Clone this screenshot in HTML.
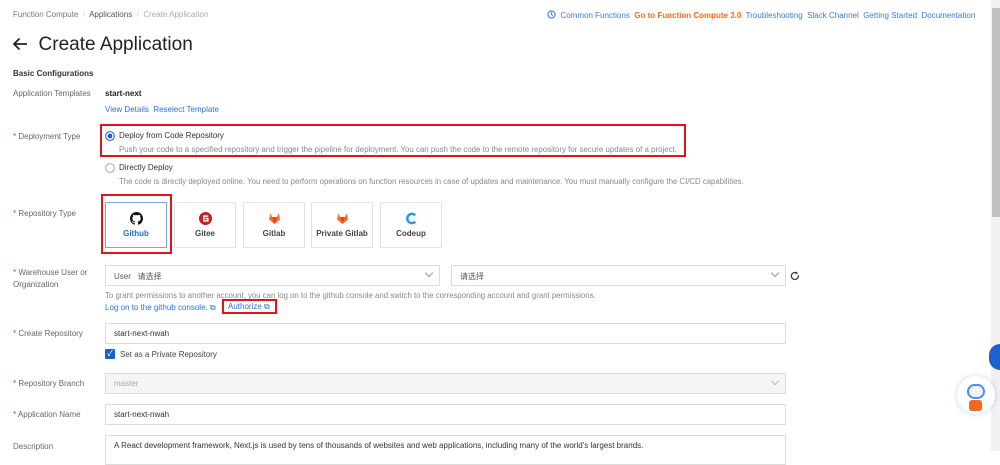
<!DOCTYPE html>
<html><head><meta charset="utf-8"><style>
*{box-sizing:border-box;margin:0;padding:0}
body{width:1000px;height:451px;overflow:hidden;background:#fff;font-family:"Liberation Sans","Noto Sans CJK SC",sans-serif;font-size:8px;color:#333;position:relative}
.a{position:absolute;white-space:nowrap}
.lbl{color:#666;font-size:8px}
.st{color:#e33}
.blue{color:#2f74d0}
.grey{color:#888}
.inp{position:absolute;border:1px solid #dcdcdc;height:21px;background:#fff;font-size:8px;padding:5px 8px;color:#333}
.card{position:absolute;top:202px;width:62px;height:46px;border:1px solid #e3e3e3;background:#fff;text-align:center;font-weight:bold;font-size:8px;color:#444}
.card svg{display:block;margin:9px auto 4px}
.red{position:absolute;border:2px solid #e0141c}
.chev{position:absolute;width:6px;height:6px;border-right:1px solid #999;border-bottom:1px solid #999;transform:rotate(45deg)}
</style></head><body>
<div class="a grey" style="left:13px;top:10px;font-size:8px;color:#777">Function Compute &nbsp;<span style="color:#ccc">/</span>&nbsp; <span style="color:#555">Applications</span> &nbsp;<span style="color:#ccc">/</span>&nbsp; <span style="color:#aaa">Create Application</span></div>
<div class="a" style="left:547px;top:10px;font-size:8px;color:#3d7bd6">
<svg width="9" height="9" viewBox="0 0 10 10" style="vertical-align:-1px"><circle cx="5" cy="5" r="4" fill="none" stroke="#3d7bd6" stroke-width="1.2"/><path d="M5 2.5V5l1.8 1" fill="none" stroke="#3d7bd6" stroke-width="1.1"/></svg>
&nbsp;Common Functions &nbsp;<b style="color:#f26a1b">Go to Function Compute 3.0</b>&nbsp; Troubleshooting &nbsp;Slack Channel &nbsp;Getting Started &nbsp;Documentation</div>
<div class="a" style="left:12px;top:34px;font-size:19px;color:#222">
<svg width="16" height="14" viewBox="0 0 16 14" style="vertical-align:-1px"><path d="M15 7H2M7.5 1.5L2 7l5.5 5.5" fill="none" stroke="#222" stroke-width="1.8"/></svg>&nbsp; Create Application</div>
<div class="a" style="left:13px;top:69px;font-weight:bold;font-size:8px;color:#333">Basic Configurations</div>
<div class="a lbl" style="left:13px;top:89px">Application Templates</div>
<div class="a" style="left:105px;top:89px;font-weight:bold;color:#222">start-next</div>
<div class="a blue" style="left:105px;top:105px">View Details &nbsp;Reselect Template</div>

<div class="a lbl" style="left:13px;top:132px"><span class="st">* </span>Deployment Type</div>
<div class="red" style="left:100px;top:124px;width:586px;height:33px"></div>
<svg class="a" style="left:105px;top:131px" width="10" height="10"><circle cx="5" cy="5" r="4.4" fill="#fff" stroke="#1a5fcf"/><circle cx="5" cy="5" r="2.4" fill="#1a5fcf"/></svg>
<div class="a" style="left:119px;top:131px;color:#333">Deploy from Code Repository</div>
<div class="a grey" style="left:119px;top:145px;font-size:7.9px">Push your code to a specified repository and trigger the pipeline for deployment. You can push the code to the remote repository for secure updates of a project.</div>
<svg class="a" style="left:105px;top:163px" width="10" height="10"><circle cx="5" cy="5" r="4.4" fill="#fff" stroke="#aaa"/></svg>
<div class="a" style="left:119px;top:163px;color:#333">Directly Deploy</div>
<div class="a grey" style="left:119px;top:177px;font-size:7.8px">The code is directly deployed online. You need to perform operations on function resources in case of updates and maintenance. You must manually configure the CI/CD capabilities.</div>

<div class="a lbl" style="left:13px;top:209px"><span class="st">* </span>Repository Type</div>
<div class="red" style="left:101px;top:194px;width:71px;height:60px"></div>
<div class="card" style="left:105px;border-color:#7aa8e6;color:#2a6ad0"><svg width="13" height="13" viewBox="0 0 16 16"><path fill="#111" d="M8 0C3.58 0 0 3.58 0 8c0 3.54 2.29 6.53 5.47 7.59.4.07.55-.17.55-.38v-1.33c-2.23.48-2.7-1.07-2.7-1.07-.36-.92-.89-1.17-.89-1.17-.73-.5.06-.49.06-.49.8.06 1.23.83 1.230.83.71 1.230 1.87.87 2.33.67.07-.52.28-.87.51-1.07-1.78-.2-3.640-.89-3.64-3.95 0-.87.31-1.59.82-2.15-.08-.2-.36-1.02.08-2.12 0 0 .67-.21 2.2.82.64-.18 1.32-.27 2-.27.68 0 1.36.09 2 .27 1.53-1.04 2.2-.82 2.2-.82.44 1.1.16 1.92.08 2.12.51.56.82 1.27.82 2.15 0 3.07-1.87 3.75-3.65 3.95.29.25.54.73.54 1.48v2.2c0 .21.15.46.55.38A8.010 8.010 0 0016 8c0-4.42-3.58-8-8-8z"/></svg>Github</div>
<div class="card" style="left:174px"><svg width="13" height="13" viewBox="0 0 14 14"><circle cx="7" cy="7" r="7" fill="#c71d23"/><path d="M10 4.5H5.2v5H9.5V7H7" fill="none" stroke="#fff" stroke-width="1.6"/></svg>Gitee</div>
<div class="card" style="left:243px"><svg width="13" height="13" viewBox="0 0 14 13"><path d="M7 12.5L1 7.5 2.5 1 4.5 5h5l2-4L13 7.5z" fill="#fc6d26"/><path d="M7 12.5L4.5 5h5z" fill="#e24329"/></svg>Gitlab</div>
<div class="card" style="left:311px"><svg width="13" height="13" viewBox="0 0 14 13"><path d="M7 12.5L1 7.5 2.5 1 4.5 5h5l2-4L13 7.5z" fill="#fc6d26"/><path d="M7 12.5L4.5 5h5z" fill="#e24329"/></svg>Private Gitlab</div>
<div class="card" style="left:380px"><svg width="13" height="13" viewBox="0 0 14 14"><path d="M11 3.5A5 5 0 1 0 11 10.5" fill="none" stroke="#1d9bf0" stroke-width="2.6"/></svg>Codeup</div>

<div class="a lbl" style="left:13px;top:267px;line-height:12px"><span class="st">* </span>Warehouse User or<br>Organization</div>
<div class="inp" style="left:105px;top:265px;width:335px;color:#555">User &nbsp;&nbsp;请选择</div>
<div class="chev" style="left:426px;top:270px"></div>
<div class="inp" style="left:451px;top:265px;width:335px;color:#555">请选择</div>
<div class="chev" style="left:772px;top:270px"></div>
<svg class="a" style="left:790px;top:271px" width="10" height="10" viewBox="0 0 10 10"><path d="M8.3 4.2A3.5 3.5 0 1 1 6.5 1.9" fill="none" stroke="#333" stroke-width="1.2"/><path d="M5.5 0.5L8 2 5.8 3.6z" fill="#333"/></svg>
<div class="a grey" style="left:105px;top:291px;font-size:7.8px">To grant permissions to another account, you can log on to the github console and switch to the corresponding account and grant permissions.</div>
<div class="a blue" style="left:105px;top:303px">Log on to the github console. &#x29C9;</div>
<div class="red" style="left:222px;top:299px;width:55px;height:15px"></div>
<div class="a blue" style="left:228px;top:302px">Authorize &#x29C9;</div>

<div class="a lbl" style="left:13px;top:329px"><span class="st">* </span>Create Repository</div>
<div class="inp" style="left:105px;top:323px;width:681px">start-next-nwah</div>
<div class="a" style="left:105px;top:349px;width:10px;height:10px;background:#1a5fcf;border-radius:1px;color:#fff;font-size:8px;line-height:10px;text-align:center">✓</div>
<div class="a" style="left:120px;top:350px;color:#444">Set as a Private Repository</div>

<div class="a lbl" style="left:13px;top:379px"><span class="st">* </span>Repository Branch</div>
<div class="inp" style="left:105px;top:373px;width:681px;background:#f5f5f5;color:#aaa">master</div>
<div class="chev" style="left:772px;top:378px;border-color:#bbb"></div>

<div class="a lbl" style="left:13px;top:410px"><span class="st">* </span>Application Name</div>
<div class="inp" style="left:105px;top:404px;width:681px">start-next-nwah</div>

<div class="a lbl" style="left:13px;top:442px">Description</div>
<div class="inp" style="left:105px;top:435px;width:681px;height:30px">A React development framework, Next.js is used by tens of thousands of websites and web applications, including many of the world's largest brands.</div>

<div class="a" style="left:991px;top:0;width:9px;height:451px;background:#f1f1f1"></div>
<div class="a" style="left:992px;top:8px;width:8px;height:209px;background:#c1c1c1"></div>
<div class="a" style="left:989px;top:344px;width:22px;height:26px;border-radius:12px;background:#1a62d0"></div>
<div class="a" style="left:957px;top:376px;width:38px;height:38px;border-radius:50%;background:#fff;box-shadow:0 0 6px rgba(80,140,230,.35)"></div>
<div class="a" style="left:967px;top:384px;width:18px;height:15px;border-radius:8px;background:#f2f2f2;border:2px solid #4b8fe8"></div>
<div class="a" style="left:969px;top:400px;width:13px;height:11px;border-radius:3px;background:#f26a1b"></div>
</body></html>
